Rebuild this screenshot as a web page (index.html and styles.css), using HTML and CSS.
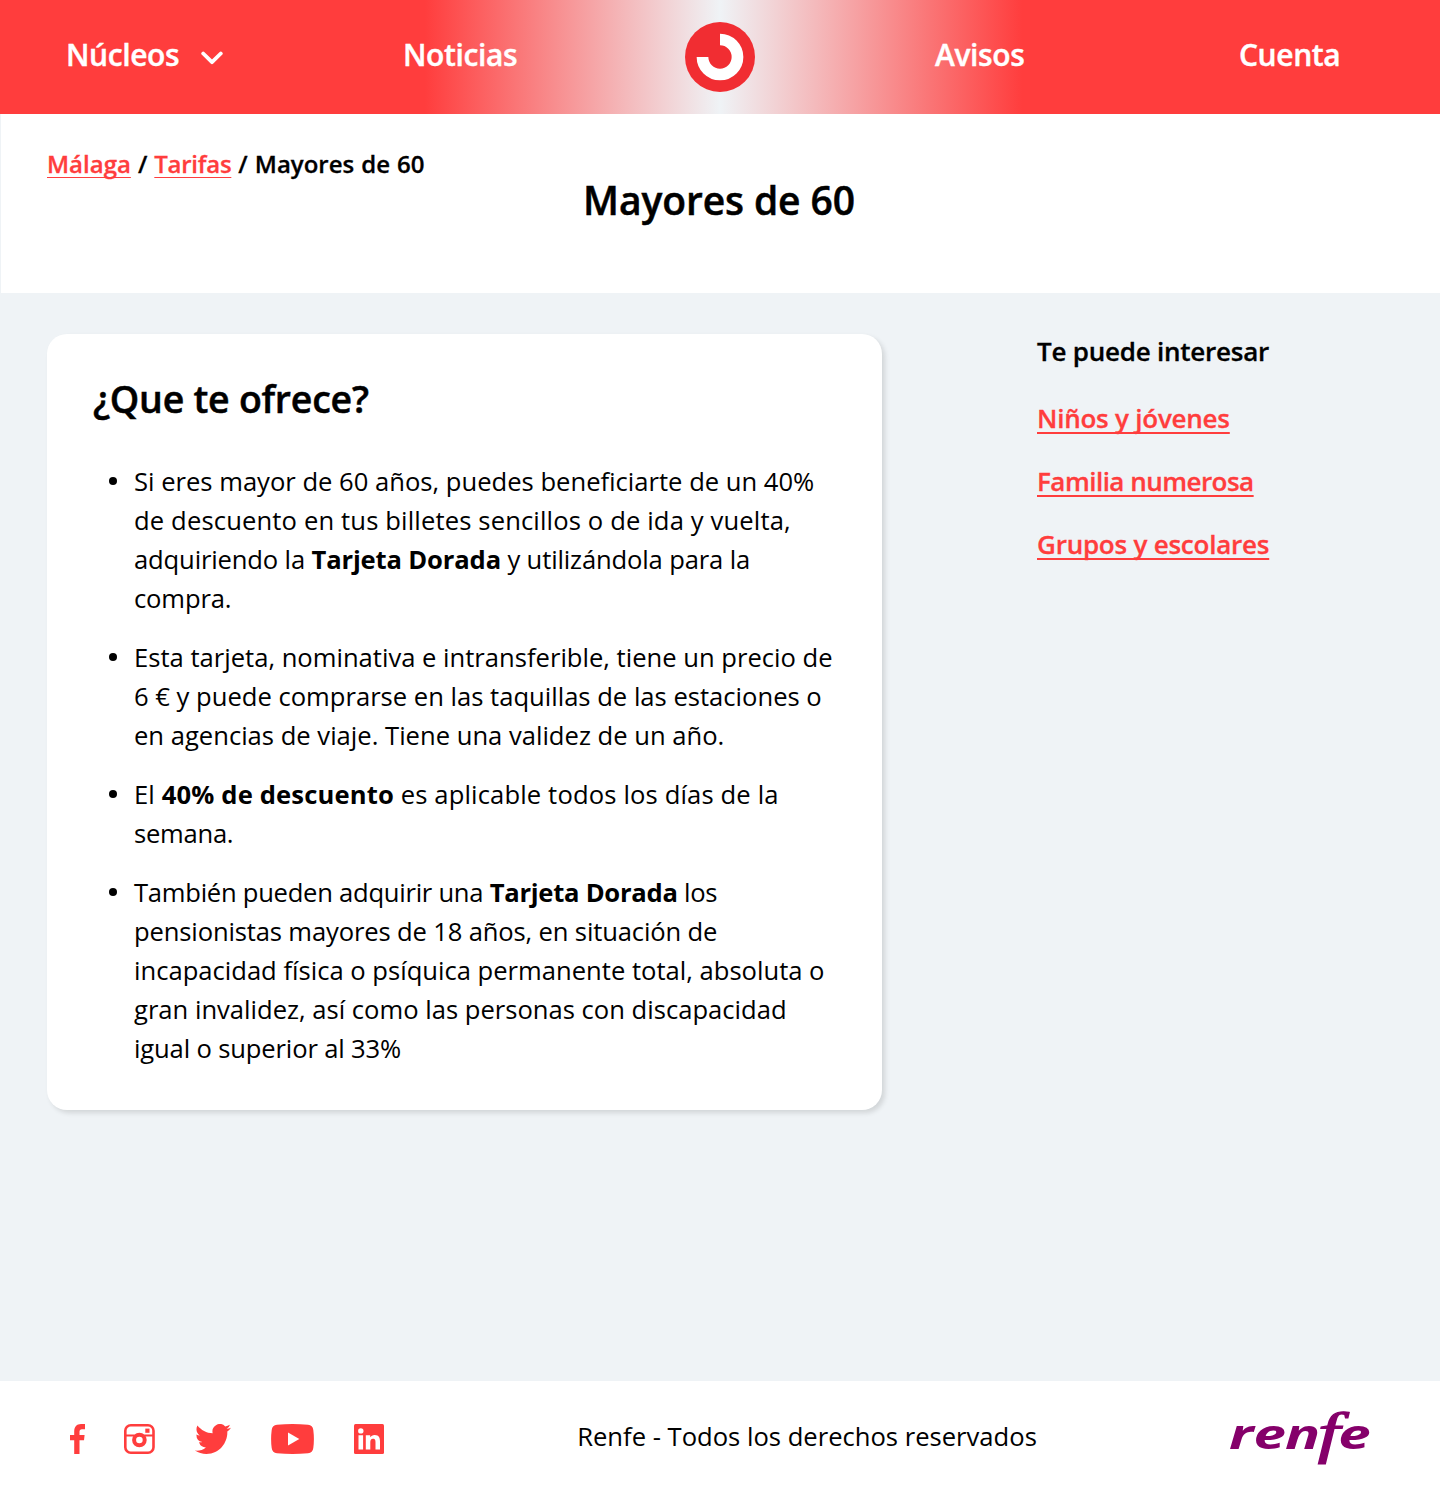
FILE: index.html
```html
<!DOCTYPE html>
<html lang="es">
<head>
<meta charset="utf-8">
<title>Mayores de 60</title>
<link rel="stylesheet" href="styles.css">
</head>
<body>
<header class="topbar">
  <a class="nav-item">Núcleos
    <svg class="chevron" width="22" height="14" viewBox="0 0 22 14"><path d="M2.200 2.500 11 11.200 19.800 2.500" fill="none" stroke="#fff" stroke-width="3.800" stroke-linecap="round" stroke-linejoin="round"/></svg>
  </a>
  <a class="nav-item">Noticias</a>
  <svg class="brand" width="70" height="70" viewBox="0 0 70 70"><circle cx="35" cy="35" r="35" fill="#f12d32"/><path d="M35 17.500A17.500 17.500 0 1 1 17.500 35" fill="none" stroke="#fff" stroke-width="11.700"/></svg>
  <a class="nav-item">Avisos</a>
  <a class="nav-item">Cuenta</a>
</header>
<section class="hero">
  <nav class="crumbs"><a class="link">Málaga</a> / <a class="link tight">Tarifas</a> / <span>Mayores de 60</span></nav>
  <h1 class="title">Mayores de 60</h1>
</section>
<main class="content">
  <article class="card">
    <h2 class="card-title">¿Que te ofrece?</h2>
    <ul class="list">
      <li><span class="line">Si eres mayor de 60 años, puedes beneficiarte de un 40%</span><span class="line loose">de descuento en tus billetes sencillos o de ida y vuelta,</span><span class="line snug">adquiriendo la <b>Tarjeta Dorada</b> y utilizándola para la</span><span class="line snug">compra.</span></li>
      <li><span class="line">Esta tarjeta, nominativa e intransferible, tiene un precio de</span><span class="line">6 € y puede comprarse en las taquillas de las estaciones o</span><span class="line">en agencias de viaje. Tiene una validez de un año.</span></li>
      <li><span class="line loose">El <b>40% de descuento</b> es aplicable todos los días de la</span><span class="line tight">semana.</span></li>
      <li><span class="line tight">También pueden adquirir una <b>Tarjeta Dorada</b> los</span><span class="line snug">pensionistas mayores de 18 años, en situación de</span><span class="line">incapacidad física o psíquica permanente total, absoluta o</span><span class="line">gran invalidez, así como las personas con discapacidad</span><span class="line snug">igual o superior al 33%</span></li>
    </ul>
  </article>
  <aside class="related">
    <h3 class="related-title">Te puede interesar</h3>
    <a class="link">Niños y jóvenes</a>
    <a class="link condensed">Familia numerosa</a>
    <a class="link">Grupos y escolares</a>
  </aside>
</main>
<footer class="footer">
  <div class="social">
    <svg width="15" height="30" viewBox="0 0 15 30" fill="#ff3d3d"><path d="M4.200 30V16.200H0V11H4.200V7.500C4.200 2.700 6.800 0 11 0H15V5.200H12C10.200 5.200 9.500 6 9.500 7.800V11H14.600L14 16.200H9.500V30Z"/></svg>
    <svg width="31" height="30" viewBox="0 0 31 30" fill="none" stroke="#ff3d3d"><rect x="1.300" y="1.300" width="28.200" height="27.400" rx="5.500" stroke-width="2.600"/><path d="M1.500 11.600H10.500M20.300 11.600H29.500" stroke-width="2"/><circle cx="15.400" cy="16" r="5.300" stroke-width="4"/><rect x="21.300" y="4.600" width="4.200" height="4.200" fill="#ff3d3d" stroke="none"/></svg>
    <svg width="36" height="30" viewBox="0 2.200 24 19.600" preserveAspectRatio="none" fill="#ff3d3d"><path d="M23.953 4.570a10 10 0 0 1-2.825.775 4.958 4.958 0 0 0 2.163-2.723c-.951.555-2.005.959-3.127 1.184a4.920 4.920 0 0 0-8.384 4.482C7.690 8.095 4.067 6.130 1.640 3.162a4.822 4.822 0 0 0-.666 2.475c0 1.710.870 3.213 2.188 4.096a4.904 4.904 0 0 1-2.228-.616v.060a4.923 4.923 0 0 0 3.946 4.827 4.996 4.996 0 0 1-2.212.085 4.936 4.936 0 0 0 4.604 3.417 9.867 9.867 0 0 1-6.102 2.105c-.390 0-.779-.023-1.170-.067a13.995 13.995 0 0 0 7.557 2.209c9.053 0 13.998-7.496 13.998-13.985 0-.210 0-.420-.015-.630A9.935 9.935 0 0 0 24 4.590z"/></svg>
    <svg width="43" height="30" viewBox="0 0 43 30"><path d="M6 .8Q21.500-.8 37 .8Q41.700 1.200 42.300 6Q43.500 15 42.300 24Q41.700 28.800 37 29.200Q21.500 30.800 6 29.200Q1.300 28.800.7 24Q-.5 15 .7 6Q1.300 1.200 6 .8Z" fill="#ff3d3d"/><path d="M17 8.600 28.300 15 17 21.400Z" fill="#fff"/></svg>
    <svg width="30" height="30" viewBox="0 0 30 30"><rect width="30" height="30" rx="1.500" fill="#ff3d3d"/><g fill="#fff"><circle cx="6.800" cy="6.900" r="2.700"/><path d="M4.500 11.300H9.100V25.500H4.500ZM11.800 11.300H16.200V13.300C17 11.900 18.600 10.900 20.700 10.900C25 10.900 26 13.700 26 17.600V25.500H21.500V18.500C21.500 16.700 21.400 14.800 19 14.800C16.700 14.800 16.300 16.600 16.300 18.400V25.500H11.800Z"/></g></svg>
  </div>
  <div class="rights">Renfe - Todos los derechos reservados</div>
  <svg class="renfe" width="142" height="56" viewBox="0 0 142 56">
    <text class="wordmark" transform="scale(1.420 1)" y="38"><tspan x="0">r</tspan><tspan x="17.300">e</tspan><tspan x="39.500">n</tspan><tspan class="wordmark-f" x="62.500" y="40.500">f</tspan><tspan x="77" y="38">e</tspan></text>
  </svg>
</footer>
</body>
</html>
```
FILE: styles.css
```css
body {
  margin: 0;
  background: #eff3f6;
  font-family: "Open Sans", "Noto Sans", sans-serif;
  color: #000;
}
h1, h2, h3, ul { margin: 0; padding: 0; font-weight: 600; }
svg { display: block; flex: none; }

.topbar {
  height: 114px;
  display: grid;
  grid-template-columns: 337px 282px 250px 304px auto;
  align-items: center;
  padding-left: 66px;
  background: linear-gradient(90deg, #ff3d3d 29.500%, #eff3f6 50%, #ff3d3d 71%);
  color: #fff;
}
.nav-item {
  display: flex;
  align-items: center;
  font-size: 30px;
  line-height: 40px;
  letter-spacing: -.4px;
  font-weight: 600;
  padding-bottom: 4px;
  -webkit-text-stroke: .4px;
}
.chevron { margin: 5px 0 0 22px; }

.hero {
  box-sizing: border-box;
  height: 179px;
  background: #fff;
  margin-left: 1px;
  padding: 37px 1px 0 46px;
  font-weight: 600;
}
.crumbs {
  font-size: 24px;
  line-height: 26px;
  word-spacing: .8px;
  -webkit-text-stroke: .3px;
}
.title {
  font-size: 39px;
  line-height: 40px;
  text-align: center;
  margin: 3px 0 0 -48px;
  letter-spacing: -.1px;
  -webkit-text-stroke: .5px;
}
.link {
  color: #ff3d3d;
  text-decoration: underline;
  text-decoration-thickness: 1px;
  text-decoration-skip-ink: none;
  text-underline-offset: 4px;
}

.content { display: flex; height: 1088px; }
.card {
  box-sizing: border-box;
  flex: none;
  width: 835px;
  height: 776px;
  margin: 41px 155px 0 47px;
  padding: 37px 0 0 46px;
  background: #fff;
  border-radius: 20px;
  box-shadow: 3px 3px 5px rgba(0, 0, 0, .12);
}
.card-title {
  font-size: 37.500px;
  line-height: 56px;
  letter-spacing: -.25px;
  -webkit-text-stroke: .5px;
}
.list {
  display: flex;
  flex-direction: column;
  gap: 20px;
  margin-top: 35px;
  padding-left: 16px;
  list-style: none;
  font-size: 25.600px;
  line-height: 39px;
  font-weight: 400;
}
.list li { display: grid; grid-template-columns: 25px 1fr; }
.list li::before {
  content: "";
  grid-row: 1;
  width: 8px;
  height: 8px;
  margin-top: 15px;
  border-radius: 50%;
  background: #000;
}
.line { grid-column: 2; white-space: nowrap; }
.loose { letter-spacing: .14px; }
.snug { letter-spacing: -.15px; }
.tight { letter-spacing: -.26px; }

.related {
  display: flex;
  flex-direction: column;
  align-items: flex-start;
  gap: 33px;
  padding-top: 43px;
  font-size: 26px;
  line-height: 30px;
  letter-spacing: -.23px;
  font-weight: 600;
  -webkit-text-stroke: .3px;
}
.related .link { text-decoration-thickness: 1.500px; }
.related-title { font-size: 26px; margin-bottom: 4px; }
.condensed { letter-spacing: -.52px; }

.footer {
  box-sizing: border-box;
  display: flex;
  align-items: center;
  height: 116px;
  padding-left: 70px;
  background: #fff;
}
.social { display: flex; gap: 39.800px; margin-right: 193px; }
.social svg:nth-child(2), .social svg:nth-child(3) { margin: 0 1px 0 -1px; }
.rights { width: 652px; font-size: 25.600px; line-height: 36px; padding-bottom: 4px; }
.renfe { overflow: visible; }
.wordmark {
  fill: #85006a;
  font: italic 700 41px "Open Sans", sans-serif;
}
.wordmark-f { font: italic 400 56px "Liberation Serif", serif; stroke: #85006a; stroke-width: 1.200px; }
```
